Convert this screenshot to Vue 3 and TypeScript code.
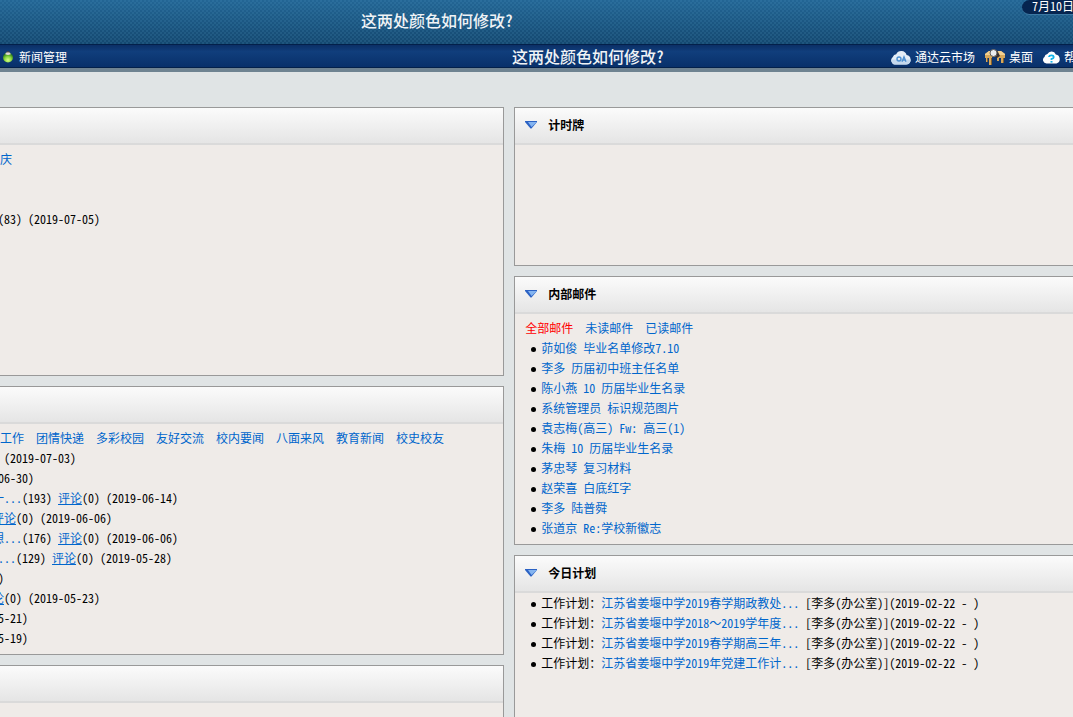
<script setup lang="ts">
interface NewsRow { title?: string; views?: string; comment?: string; tail: string }
interface Mail { sender: string; subject: string }

const categories: string[] = ['工作', '团情快递', '多彩校园', '友好交流', '校内要闻', '八面来风', '教育新闻', '校史校友']
const news: NewsRow[] = [
  { tail: '  (2019-07-03)' },
  { tail: '-06-30)' },
  { title: '一...', views: '(193) ', comment: '评论', tail: '(0) (2019-06-14)' },
  { comment: '评论', tail: '(0) (2019-06-06)' },
  { title: '想...', views: '(176) ', comment: '评论', tail: '(0) (2019-06-06)' },
  { title: '....', views: '(129) ', comment: '评论', tail: '(0) (2019-05-28)' },
  { tail: '6)' },
  { comment: '论', tail: '(0) (2019-05-23)' },
  { tail: '05-21)' },
  { tail: '05-19)' },
]
const mailTabs: string[] = ['全部邮件', '未读邮件', '已读邮件']
const mails: Mail[] = [
  { sender: '茆如俊', subject: '毕业名单修改7.10' },
  { sender: '李多', subject: '历届初中班主任名单' },
  { sender: '陈小燕', subject: '10 历届毕业生名录' },
  { sender: '系统管理员', subject: '标识规范图片' },
  { sender: '袁志梅(高三)', subject: 'Fw: 高三(1)' },
  { sender: '朱梅', subject: '10 历届毕业生名录' },
  { sender: '茅忠琴', subject: '复习材料' },
  { sender: '赵荣喜', subject: '白底红字' },
  { sender: '李多', subject: '陆普舜' },
  { sender: '张道京', subject: 'Re:学校新徽志' },
]
const plans: string[][] = [
  ['江苏省姜堰中学2019春学期政教处...'],
  ['江苏省姜堰中学2018', '～', '2019学年度...'],
  ['江苏省姜堰中学2019春学期高三年...'],
  ['江苏省姜堰中学2019年党建工作计...'],
]
</script>

<template>
  <div class="page">
    <header class="banner">
      <p class="note">这两处颜色如何修改?</p>
      <time class="date">7月10日</time>
    </header>

    <nav class="bar">
      <a class="bar-link news-link" href="#">
        <svg width="12" height="12" viewBox="0 0 12 12" aria-hidden="true">
          <defs>
            <radialGradient id="bead" cx=".5" cy=".75" r=".65">
              <stop offset="0" stop-color="#d6ff8a" />
              <stop offset=".55" stop-color="#86d63c" />
              <stop offset="1" stop-color="#2c7a1c" />
            </radialGradient>
          </defs>
          <circle cx="6" cy="6.5" r="5" fill="url(#bead)" />
          <path d="M3.2 3.2Q3.6 1 6 1t2.8 2.2Q6 4.6 3.2 3.2z" fill="#ddd8d4" />
          <path d="M4.5 1.2Q6 .2 7.5 1.2" fill="none" stroke="#63483c" />
        </svg>
        新闻管理
      </a>
      <p class="note">这两处颜色如何修改?</p>
      <div class="tools">
        <a class="bar-link" href="#">
          <svg width="20" height="15" viewBox="0 0 20 15" aria-hidden="true">
            <path d="M4.5 14.5A4.3 4.3 0 0 1 1.8 6.9 4 4 0 0 1 5.2 4.2 5.6 5.6 0 0 1 15.6 5a4.8 4.8 0 0 1-.4 9.5z" fill="#e4eef8" />
            <path d="M4.5 14.5A4.3 4.3 0 0 1 .4 9.5h19.4a4.8 4.8 0 0 1-4.6 5z" fill="#c5d9ee" />
            <circle cx="8" cy="9" r="2" fill="none" stroke="#4c8fd0" stroke-width="1.4" />
            <path d="M11 11.7l2-5 2 5M11.8 10h2.4" fill="none" stroke="#4c8fd0" stroke-width="1.3" />
          </svg>
          通达云市场
        </a>
        <a class="bar-link" href="#">
          <svg width="20" height="16" viewBox="0 0 20 16" aria-hidden="true">
            <path d="M0 5l4-3h12l4 3v4h-1v5h-3V9h-2v3h-2V8H7v8H4V9H2v4H1V9H0z" fill="#d7a95c" />
            <path d="M0 5l4-3h12l4 3v1H0z" fill="#f2d091" />
            <path d="M6.5 9v7M18.5 9v5M2.5 9v4" stroke="#86602c" />
            <path d="M10 3l2-2 3 6-3 2-3-2z" fill="#373132" />
            <circle cx="8.500" cy="4" r="3.500" fill="#e9edf0" stroke="#5f5a55" />
          </svg>
          桌面
        </a>
        <a class="bar-link" href="#">
          <svg width="17" height="14" viewBox="0 0 17 14" aria-hidden="true">
            <path d="M3.5 13.500A3.600 3.600 0 0 1 1.500 7 3.300 3.300 0 0 1 4.400 4 4.600 4.600 0 0 1 12.800 4.400 4.700 4.700 0 0 1 13.500 13.500z" fill="#fff" />
            <path d="M6 7Q6.200 5.300 8.400 5.300t2.300 1.600-2.200 2.100v1" fill="none" stroke="#12b4ea" stroke-width="1.8" />
            <rect x="7.500" y="11" width="2" height="1.600" fill="#12b4ea" />
          </svg>
          帮助
        </a>
      </div>
    </nav>

    <main class="board">
      <div class="column">
        <section class="panel tall left">
          <header class="panel-head"></header>
          <div class="panel-body">
            <div class="tabs"><a href="#">庆</a></div>
            <ul class="news spaced"><li>&nbsp;(83) (2019-07-05)</li></ul>
          </div>
        </section>
        <section class="panel tall left">
          <header class="panel-head"></header>
          <div class="panel-body">
            <div class="tabs"><a v-for="c in categories" :key="c" href="#">{{ c }}</a></div>
            <ul class="news">
              <li v-for="(n, i) in news" :key="i"><a v-if="n.title" href="#">{{ n.title }}</a>{{ n.views }}<a v-if="n.comment" class="comment" href="#">{{ n.comment }}</a>{{ n.tail }}</li>
            </ul>
          </div>
        </section>
        <section class="panel tall left"><header class="panel-head"></header></section>
      </div>

      <div class="column">
        <section class="panel short right">
          <header class="panel-head">
            <svg width="12" height="8" viewBox="0 0 12 8" aria-hidden="true"><path d="M0 0h12v1L6.500 7.500h-1L0 1z" fill="#2b62c4" /><path d="M3 1h9L6.500 6z" fill="#84b4f0" /></svg>
            <h2>计时牌</h2>
          </header>
        </section>
        <section class="panel tall right">
          <header class="panel-head">
            <svg width="12" height="8" viewBox="0 0 12 8" aria-hidden="true"><path d="M0 0h12v1L6.500 7.500h-1L0 1z" fill="#2b62c4" /><path d="M3 1h9L6.500 6z" fill="#84b4f0" /></svg>
            <h2>内部邮件</h2>
          </header>
          <div class="panel-body">
            <div class="tabs"><a v-for="(t, i) in mailTabs" :key="t" :class="{ active: i === 0 }" href="#">{{ t }}</a></div>
            <ul class="items">
              <li v-for="(m, i) in mails" :key="i"><a href="#">{{ m.sender }} {{ m.subject }}</a></li>
            </ul>
          </div>
        </section>
        <section class="panel tall right">
          <header class="panel-head">
            <svg width="12" height="8" viewBox="0 0 12 8" aria-hidden="true"><path d="M0 0h12v1L6.500 7.500h-1L0 1z" fill="#2b62c4" /><path d="M3 1h9L6.500 6z" fill="#84b4f0" /></svg>
            <h2>今日计划</h2>
          </header>
          <div class="panel-body tight">
            <ul class="items">
              <li v-for="(p, i) in plans" :key="i">工作计划：<a href="#"><span v-for="part in p" :key="part" :class="{ wide: part === '～' }">{{ part }}</span></a> [李多(办公室)](2019-02-22 - )</li>
            </ul>
          </div>
        </section>
      </div>
    </main>
  </div>
</template>

<style>
html, body { height: 100%; overflow: hidden; }
#app { height: 100%; }
</style>

<style scoped>
.page {
  height: 100%;
  overflow: hidden;
  background: #e0e4e5;
  color: #000;
  font: 12px/20px "Noto Sans CJK SC", sans-serif;
  font-feature-settings: "hwid";
}
a { color: #0066cc; text-decoration: none; }
p, h2, ul { margin: 0; padding: 0; }
ul { list-style: none; }

.banner {
  display: flex;
  align-items: flex-start;
  justify-content: space-between;
  height: 44px;
  overflow: hidden;
  background:
    radial-gradient(circle at 1px 1px, rgba(90, 160, 200, .5) 0, transparent 1px) 0 0 / 4px 4px,
    radial-gradient(circle at 1px 1px, rgba(90, 160, 200, .5) 0, transparent 1px) 2px 2px / 4px 4px,
    linear-gradient(#236695, #144870);
}
.note {
  color: #f0f3f6;
  font-size: 16px;
  font-weight: 500;
  line-height: 20px;
  white-space: nowrap;
}
.banner .note { padding: 10px 0 0 361px; }
.date {
  box-sizing: border-box;
  width: 51px;
  height: 15px;
  padding-left: 10px;
  border-bottom: 1px solid #3d79a3;
  border-radius: 12px 0 0 12px;
  background: #062550;
  color: #fff;
  line-height: 12px;
  white-space: nowrap;
}

.bar {
  display: flex;
  align-items: center;
  height: 22px;
  border-top: 1px solid #03204a;
  border-bottom: 1px solid #03204a;
  background: linear-gradient(#0b2f66, #103e7c 30%, #08306a);
  box-shadow: 0 4px #6f8391;
}
.bar-link {
  display: flex;
  align-items: center;
  gap: 4px;
  padding-top: 2px;
  color: #fff;
  white-space: nowrap;
}
.news-link { flex: 0 0 510px; gap: 5px; padding-left: 2px; }
.tools { display: flex; gap: 10px; margin: 0 -15px 0 auto; }

.board {
  display: grid;
  grid-template-columns: 47% 1fr;
  gap: 10px;
  padding-top: 39px;
}
.column { display: flex; flex-direction: column; gap: 10px; min-width: 0; }
.panel {
  box-sizing: border-box;
  overflow: hidden;
  border: 1px solid #999;
  background: #efebe8;
}
.left { border-left: 0; }
.right { border-right: 0; }
.tall { min-height: 269px; }
.short { min-height: 159px; }
.panel-head {
  display: flex;
  align-items: center;
  gap: 11px;
  box-sizing: border-box;
  height: 37px;
  padding: 0 0 2px 10px;
  border-bottom: 2px solid #dadada;
  background: linear-gradient(#fbfbfb, #e5e5e5);
}
.panel-head h2 { font-size: 12px; font-weight: 700; line-height: 20px; }
.panel-body { padding: 4px 0 5px; white-space: nowrap; }
.panel-body.tight { padding-top: 0; }
.tabs { display: flex; gap: 12px; }
.right .tabs { padding-left: 10px; }
.tabs .active { color: #f00; }
.news { margin-left: -8px; white-space: pre; }
.spaced { margin-top: 40px; }
.comment { text-decoration: underline; }
.items li { display: flex; align-items: center; white-space: pre; }
.items li::before {
  content: "";
  width: 5px;
  height: 5px;
  margin: 2px 5px 0 16px;
  border-radius: 50%;
  background: #000;
}
.wide { font-feature-settings: normal; }
</style>
